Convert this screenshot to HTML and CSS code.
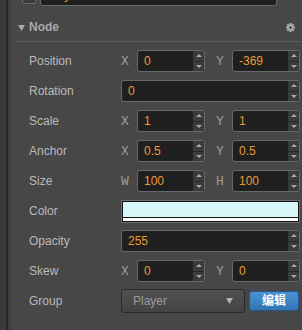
FILE: index.html
```html
<!DOCTYPE html>
<html lang="zh">
<head>
    <meta charset="UTF-8">
    <title>Node Inspector</title>
    <link rel="stylesheet" href="styles.css">
</head>
<body>
    <div class="inspector">
        <div class="gutter"></div>
        <div class="panel">
            <div class="prev-row">
                <span class="prev-check"></span>
                <span class="prev-input">Player</span>
            </div>

            <div class="section-head">
                <svg class="caret" width="7" height="6" viewBox="0 0 7 6"><polygon points="0,0 7,0 3.5,6" fill="#a9a9a9"/></svg>
                <span class="section-title">Node</span>
                <svg class="gear" width="9" height="9" viewBox="0 0 9 9">
                    <g fill="#a9a9a9">
                        <rect x="3.5" y="0" width="2" height="9"/>
                        <rect x="0" y="3.5" width="9" height="2"/>
                        <rect x="3.5" y="0" width="2" height="9" transform="rotate(45 4.5 4.5)"/>
                        <rect x="3.5" y="0" width="2" height="9" transform="rotate(-45 4.5 4.5)"/>
                        <circle cx="4.5" cy="4.5" r="3.2"/>
                    </g>
                    <circle cx="4.5" cy="4.5" r="1.3" fill="#474747"/>
                </svg>
            </div>

            <div class="props">
                <div class="prop">
                    <span class="prop-name">Position</span>
                    <div class="vec">
                        <div class="axis"><span class="axis-key">X</span><div class="num"><span class="num-val">0</span><span class="spin"><i class="up"></i><i class="down"></i></span></div></div>
                        <div class="axis"><span class="axis-key">Y</span><div class="num"><span class="num-val">-369</span><span class="spin"><i class="up"></i><i class="down"></i></span></div></div>
                    </div>
                </div>
                <div class="prop">
                    <span class="prop-name">Rotation</span>
                    <div class="num"><span class="num-val">0</span><span class="spin"><i class="up"></i><i class="down"></i></span></div>
                </div>
                <div class="prop">
                    <span class="prop-name">Scale</span>
                    <div class="vec">
                        <div class="axis"><span class="axis-key">X</span><div class="num"><span class="num-val">1</span><span class="spin"><i class="up"></i><i class="down"></i></span></div></div>
                        <div class="axis"><span class="axis-key">Y</span><div class="num"><span class="num-val">1</span><span class="spin"><i class="up"></i><i class="down"></i></span></div></div>
                    </div>
                </div>
                <div class="prop">
                    <span class="prop-name">Anchor</span>
                    <div class="vec">
                        <div class="axis"><span class="axis-key">X</span><div class="num"><span class="num-val">0.5</span><span class="spin"><i class="up"></i><i class="down"></i></span></div></div>
                        <div class="axis"><span class="axis-key">Y</span><div class="num"><span class="num-val">0.5</span><span class="spin"><i class="up"></i><i class="down"></i></span></div></div>
                    </div>
                </div>
                <div class="prop">
                    <span class="prop-name">Size</span>
                    <div class="vec">
                        <div class="axis"><span class="axis-key">W</span><div class="num"><span class="num-val">100</span><span class="spin"><i class="up"></i><i class="down"></i></span></div></div>
                        <div class="axis"><span class="axis-key">H</span><div class="num"><span class="num-val">100</span><span class="spin"><i class="up"></i><i class="down"></i></span></div></div>
                    </div>
                </div>
                <div class="prop">
                    <span class="prop-name">Color</span>
                    <div class="color-field">
                        <div class="swatch"></div>
                        <div class="alpha"></div>
                    </div>
                </div>
                <div class="prop">
                    <span class="prop-name">Opacity</span>
                    <div class="num"><span class="num-val">255</span><span class="spin"><i class="up"></i><i class="down"></i></span></div>
                </div>
                <div class="prop">
                    <span class="prop-name">Skew</span>
                    <div class="vec">
                        <div class="axis"><span class="axis-key">X</span><div class="num"><span class="num-val">0</span><span class="spin"><i class="up"></i><i class="down"></i></span></div></div>
                        <div class="axis"><span class="axis-key">Y</span><div class="num"><span class="num-val">0</span><span class="spin"><i class="up"></i><i class="down"></i></span></div></div>
                    </div>
                </div>
                <div class="prop">
                    <span class="prop-name">Group</span>
                    <div class="select">
                        <span>Player</span>
                        <svg width="7" height="6" viewBox="0 0 7 6"><polygon points="0,0 7,0 3.5,6" fill="#b0b0b0"/></svg>
                    </div>
                    <button class="edit-btn">编辑</button>
                </div>
            </div>
        </div>
    </div>
</body>
</html>
```

FILE: styles.css
```css
body {
    margin: 0;
    background-color: #474747;
    font-family: "Liberation Sans", Arial, sans-serif;
    font-size: 12px;
    overflow: hidden;
}

.inspector {
    display: flex;
    height: 330px;
}

.gutter {
    width: 11px;
    flex-shrink: 0;
    background: linear-gradient(to right, #3b3b3b 0 6px, #282828 6px 8px, #3e3e3e 8px 11px);
}

.panel {
    flex: 1;
    min-width: 0;
}

/* tail of the previous component, cut off at the top */
.prev-row {
    height: 6px;
    overflow: hidden;
    display: flex;
    align-items: flex-end;
    gap: 4px;
    padding-left: 11px;
}

.prev-check {
    width: 14px;
    height: 14px;
    box-sizing: border-box;
    border: 1px solid #6a6a6a;
    border-radius: 2px;
    background-color: #3a3a3a;
    margin-bottom: 2px;
    flex-shrink: 0;
}

.prev-input {
    width: 237px;
    height: 22px;
    box-sizing: border-box;
    border: 1px solid #6a6a6a;
    border-radius: 3px;
    background-color: #1f1f1f;
    color: #ea9a34;
    line-height: 20px;
    padding-left: 6px;
    flex-shrink: 0;
}

.section-head {
    display: flex;
    align-items: center;
    margin-left: 5px;
    padding: 14px 7px 6px 2px;
    line-height: 15px;
    border-bottom: 1px solid #5c5c5c;
}

.caret {
    margin-right: 4px;
}

.section-title {
    font-weight: bold;
    color: #a9a9a9;
}

.gear {
    margin-left: auto;
}

.props {
    display: flex;
    flex-direction: column;
    gap: 8px;
    padding: 8px 2px 0 18px;
}

.prop {
    display: flex;
    align-items: center;
    height: 22px;
}

.prop-name {
    width: 92px;
    flex-shrink: 0;
    color: #bababa;
}

.vec {
    flex: 1;
    display: grid;
    grid-template-columns: 1fr 1fr;
    column-gap: 11px;
}

.axis {
    display: flex;
    align-items: center;
}

.axis-key {
    width: 16px;
    flex-shrink: 0;
    font-family: "Liberation Mono", "Courier New", monospace;
    font-size: 13px;
    color: #9c9c9c;
}

.num {
    flex: 1;
    display: flex;
    height: 22px;
    box-sizing: border-box;
    border: 1px solid #686868;
    border-radius: 3px;
    background-color: #1f1f1f;
    overflow: hidden;
}

.num-val {
    flex: 1;
    padding-left: 6px;
    line-height: 20px;
    color: #ea9a34;
}

.spin {
    width: 11px;
    display: flex;
    flex-direction: column;
    background-color: #3b3b3b;
}

.spin i {
    flex: 1;
    display: flex;
    align-items: center;
    justify-content: center;
}

.spin .down {
    border-top: 1px solid #2a2a2a;
}

.spin .up::before,
.spin .down::before {
    content: "";
    border-left: 3px solid transparent;
    border-right: 3px solid transparent;
}

.spin .up::before {
    border-bottom: 3px solid #a8a8a8;
}

.spin .down::before {
    border-top: 3px solid #a8a8a8;
}

.color-field {
    flex: 1;
    height: 23px;
    box-sizing: border-box;
    border: 1px solid #6e6e6e;
    box-shadow: inset 0 0 0 1px #111;
    padding: 1px;
    display: flex;
    flex-direction: column;
    align-self: flex-start;
}

.swatch {
    flex: 1;
    background-color: #d9f8fa;
}

.alpha {
    height: 3px;
    border-top: 1px solid #111;
    background-color: #fff;
}

.select {
    width: 124px;
    height: 24px;
    box-sizing: border-box;
    border: 1px solid #2a2a2a;
    border-radius: 3px;
    background: linear-gradient(#505050, #444);
    display: flex;
    align-items: center;
    justify-content: space-between;
    padding: 0 11px;
    color: #9b9b9b;
    flex-shrink: 0;
}

.edit-btn {
    margin-left: 4px;
    width: 50px;
    height: 20px;
    padding: 0;
    border: 1px solid #24588c;
    border-radius: 3px;
    background: linear-gradient(#4c93d3, #3274b4);
    color: #fff;
    font-family: "Liberation Sans", "Noto Sans CJK SC", sans-serif;
    font-size: 12px;
    font-weight: bold;
    line-height: 18px;
}
```
